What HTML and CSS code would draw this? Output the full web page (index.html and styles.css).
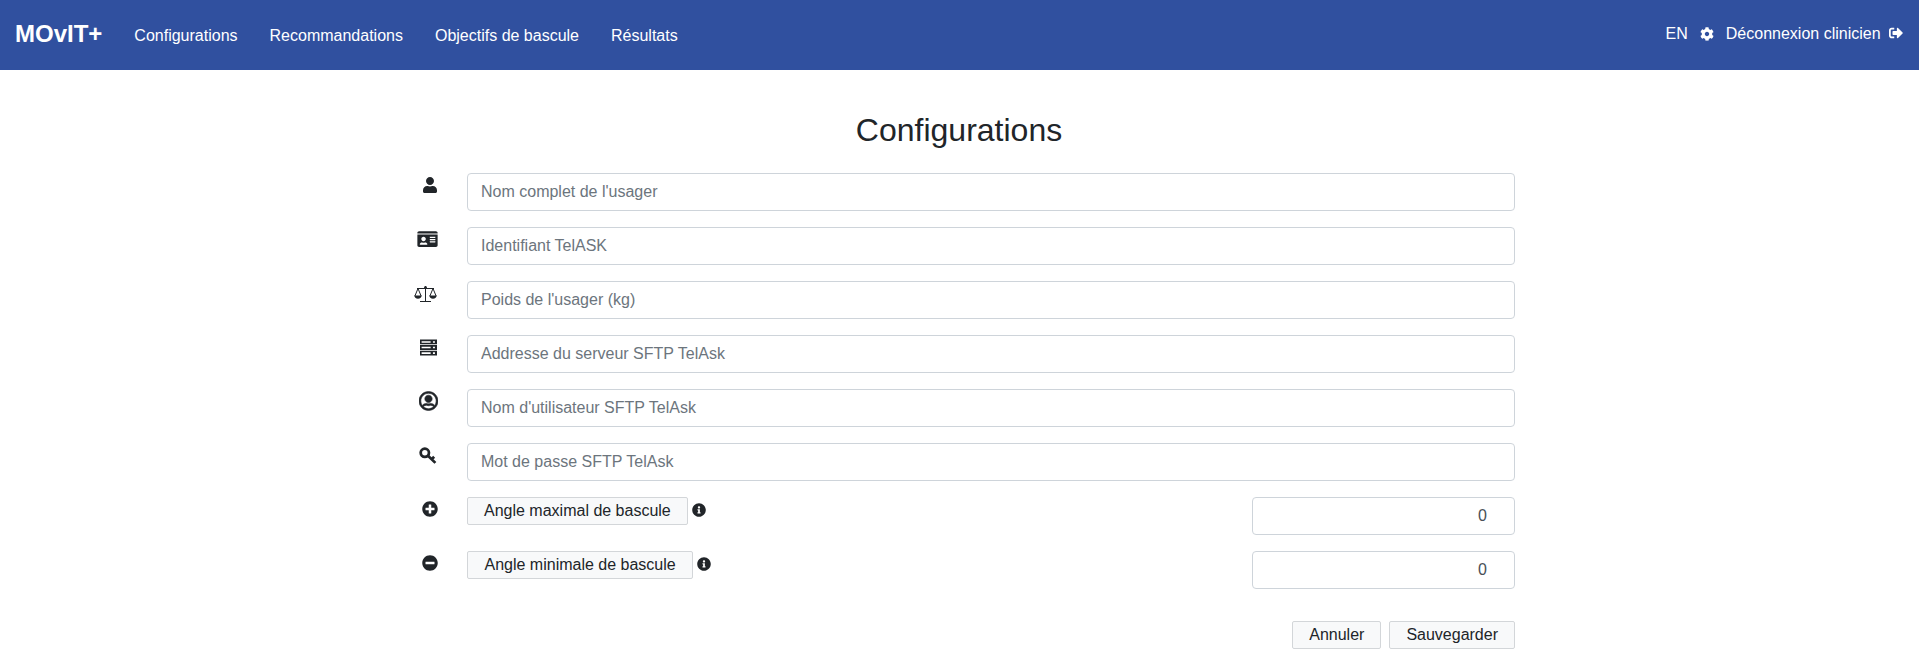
FILE: index.html
```html
<!DOCTYPE html>
<html lang="fr">

<head>
  <meta charset="UTF-8">
  <meta name="viewport" content="width=device-width, initial-scale=1.0">
  <title>MOvIT+</title>
  <link rel="stylesheet" href="styles.css">
</head>

<body>
  <nav class="navbar">
    <a class="brand" href="#">MOvIT+</a>
    <ul class="nav-links">
      <li><a href="#">Configurations</a></li>
      <li><a href="#">Recommandations</a></li>
      <li><a href="#">Objectifs de bascule</a></li>
      <li><a href="#">Résultats</a></li>
    </ul>
    <div class="nav-right">
      <a href="#">EN</a>
      <svg class="nav-icon" viewBox="0 0 512 512"><path d="M487.4 315.7l-42.6-24.6c4.3-23.2 4.3-47 0-70.2l42.6-24.6c4.9-2.8 7.1-8.6 5.5-14-11.1-35.6-30-67.8-54.7-94.6-3.8-4.1-10-5.1-14.8-2.3L380.8 110c-17.9-15.4-38.5-27.3-60.8-35.1V25.8c0-5.6-3.9-10.5-9.4-11.7-36.7-8.2-74.3-7.8-109.2 0-5.5 1.2-9.4 6.1-9.4 11.7V75c-22.2 7.9-42.8 19.8-60.8 35.1L88.7 85.5c-4.9-2.8-11-1.9-14.8 2.3-24.7 26.7-43.6 58.9-54.7 94.6-1.7 5.4.6 11.2 5.5 14L67.3 221c-4.3 23.2-4.3 47 0 70.2l-42.6 24.6c-4.9 2.8-7.1 8.6-5.5 14 11.1 35.6 30 67.8 54.7 94.6 3.8 4.1 10 5.1 14.8 2.3l42.6-24.6c17.9 15.4 38.5 27.3 60.8 35.1v49.2c0 5.6 3.9 10.5 9.4 11.7 36.7 8.2 74.3 7.8 109.2 0 5.5-1.2 9.4-6.1 9.4-11.7v-49.2c22.2-7.9 42.8-19.8 60.8-35.1l42.6 24.6c4.9 2.8 11 1.9 14.8-2.3 24.7-26.7 43.6-58.9 54.7-94.6 1.5-5.5-.7-11.3-5.6-14.1zM256 336c-44.1 0-80-35.9-80-80s35.9-80 80-80 80 35.9 80 80-35.9 80-80 80z"/></svg>
      <a href="#" class="logout">Déconnexion clinicien
        <svg class="nav-icon" viewBox="0 0 512 512"><path d="M497 273L329 441c-15 15-41 4.5-41-17v-96H152c-13.3 0-24-10.7-24-24v-96c0-13.3 10.7-24 24-24h136V88c0-21.4 25.9-32 41-17l168 168c9.3 9.4 9.3 24.6 0 34zM192 436v-40c0-6.6-5.4-12-12-12H96c-17.7 0-32-14.3-32-32V160c0-17.7 14.3-32 32-32h84c6.6 0 12-5.4 12-12V76c0-6.6-5.4-12-12-12H96c-53 0-96 43-96 96v192c0 53 43 96 96 96h84c6.6 0 12-5.4 12-12z"/></svg>
      </a>
    </div>
  </nav>

  <main class="content">
    <h2 class="title">Configurations</h2>

    <div class="row">
      <span class="row-icon">
        <svg class="icon" viewBox="0 0 448 512"><path d="M224 256c70.7 0 128-57.3 128-128S294.7 0 224 0 96 57.3 96 128s57.3 128 128 128zm89.6 32h-16.7c-22.2 10.2-46.9 16-72.9 16s-50.6-5.8-72.9-16h-16.7C60.2 288 0 348.2 0 422.4V464c0 26.5 21.5 48 48 48h352c26.5 0 48-21.5 48-48v-41.6c0-74.2-60.2-134.4-134.4-134.4z"/></svg>
      </span>
      <input class="field" type="text" placeholder="Nom complet de l'usager">
    </div>

    <div class="row">
      <span class="row-icon">
        <svg class="icon icon-card" viewBox="0 0 576 512"><path d="M528 32H48C21.5 32 0 53.5 0 80v16h576V80c0-26.5-21.500-48-48-48zM0 432c0 26.5 21.500 48 48 48h480c26.500 0 48-21.500 48-48V128H0v304zm352-232c0-4.400 3.600-8 8-8h144c4.400 0 8 3.600 8 8v16c0 4.400-3.600 8-8 8H360c-4.400 0-8-3.600-8-8v-16zm0 64c0-4.400 3.600-8 8-8h144c4.400 0 8 3.600 8 8v16c0 4.400-3.600 8-8 8H360c-4.400 0-8-3.600-8-8v-16zm0 64c0-4.400 3.600-8 8-8h144c4.400 0 8 3.600 8 8v16c0 4.400-3.600 8-8 8H360c-4.400 0-8-3.600-8-8v-16zM176 192c35.300 0 64 28.700 64 64s-28.700 64-64 64-64-28.700-64-64 28.700-64 64-64zM67.100 396.200C75.500 370.500 99.600 352 128 352h8.200c12.300 5.100 25.700 8 39.800 8s27.600-2.900 39.800-8h8.200c28.400 0 52.500 18.500 60.900 44.200 3.200 9.900-5.200 19.800-15.600 19.800H82.700c-10.400 0-18.800-10-15.600-19.800z"/></svg>
      </span>
      <input class="field" type="text" placeholder="Identifiant TelASK">
    </div>

    <div class="row">
      <span class="row-icon">
        <svg class="icon icon-scale" viewBox="0 0 23 18"><path class="scale-line" d="M11.500 1v15M6 16.500h11M3 3.500h17M4 3.500L.9 11M4 3.500L7.100 11M19 3.500L15.900 11M19 3.500L22.100 11"/><path d="M.3 10.500h7.400c0 2-1.600 3.200-3.700 3.200S.3 12.500.3 10.500zM15.300 10.500h7.400c0 2-1.600 3.200-3.700 3.200s-3.700-1.200-3.700-3.200z"/><circle cx="11.500" cy="2.500" r="1.500"/></svg>
      </span>
      <input class="field" type="text" placeholder="Poids de l'usager (kg)">
    </div>

    <div class="row">
      <span class="row-icon">
        <svg class="icon icon-server" viewBox="0 0 512 512"><path fill-rule="evenodd" d="M0 16h512v144H0zM0 184h512v144H0zM0 352h512v144H0zM48 64v48h272V64zM48 232v48h272v-48zM48 400v48h272v-48zM390 64v48h60V64zM390 232v48h60v-48zM390 400v48h60v-48z"/></svg>
      </span>
      <input class="field" type="text" placeholder="Addresse du serveur SFTP TelAsk">
    </div>

    <div class="row">
      <span class="row-icon">
        <svg class="icon icon-circle" viewBox="0 0 496 512"><path d="M248 104c-53 0-96 43-96 96s43 96 96 96 96-43 96-96-43-96-96-96zm0-96C111 8 0 119 0 256s111 248 248 248 248-111 248-248S385 8 248 8zm0 448c-49.700 0-95.100-18.300-130.100-48.400 14.900-23 40.400-38.600 69.600-39.500 20.800 6.400 40.600 9.600 60.500 9.600s39.700-3.100 60.500-9.600c29.200 1 54.700 16.500 69.600 39.500-35 30.100-80.400 48.400-130.100 48.400zm162.700-84.100c-24.400-31.400-62.100-51.900-105-51.900-10.200 0-26 9.600-57.700 9.600-31.600 0-47.500-9.600-57.700-9.600-42.800 0-80.500 20.500-105 51.900C61.900 339.200 48 299.300 48 256c0-110.300 89.700-200 200-200s200 89.700 200 200c0 43.300-13.900 83.200-37.300 115.900z"/></svg>
      </span>
      <input class="field" type="text" placeholder="Nom d'utilisateur SFTP TelAsk">
    </div>

    <div class="row">
      <span class="row-icon">
        <svg class="icon icon-key" viewBox="0 0 17 17"><circle cx="5.500" cy="5.500" r="3.900"/><path d="M8.500 8.200l7 6.800M12 11.600l2.300-2.300"/></svg>
      </span>
      <input class="field" type="password" placeholder="Mot de passe SFTP TelAsk">
    </div>

    <div class="row">
      <span class="row-icon">
        <svg class="icon" viewBox="0 0 512 512"><path d="M256 8C119 8 8 119 8 256s111 248 248 248 248-111 248-248S393 8 256 8zm144 276c0 6.600-5.400 12-12 12h-92v92c0 6.600-5.400 12-12 12h-56c-6.600 0-12-5.400-12-12v-92h-92c-6.600 0-12-5.400-12-12v-56c0-6.600 5.400-12 12-12h92v-92c0-6.600 5.400-12 12-12h56c6.600 0 12 5.400 12 12v92h92c6.600 0 12 5.400 12 12v56z"/></svg>
      </span>
      <div class="angle-label">
        <button class="btn" type="button">Angle maximal de bascule</button>
        <svg class="info" viewBox="0 0 512 512"><path d="M256 8C119.043 8 8 119.083 8 256c0 136.997 111.043 248 248 248s248-111.003 248-248C504 119.083 392.957 8 256 8zm0 110c23.196 0 42 18.804 42 42s-18.804 42-42 42-42-18.804-42-42 18.804-42 42-42zm56 254c0 6.627-5.373 12-12 12h-88c-6.627 0-12-5.373-12-12v-24c0-6.627 5.373-12 12-12h12v-64h-12c-6.627 0-12-5.373-12-12v-24c0-6.627 5.373-12 12-12h64c6.627 0 12 5.373 12 12v100h12c6.627 0 12 5.373 12 12v24z"/></svg>
      </div>
      <input class="field number" type="text" value="0">
    </div>

    <div class="row">
      <span class="row-icon">
        <svg class="icon" viewBox="0 0 512 512"><path d="M256 8C119 8 8 119 8 256s111 248 248 248 248-111 248-248S393 8 256 8zM124 296c-6.600 0-12-5.400-12-12v-56c0-6.600 5.400-12 12-12h264c6.600 0 12 5.400 12 12v56c0 6.600-5.400 12-12 12H124z"/></svg>
      </span>
      <div class="angle-label">
        <button class="btn btn-min" type="button">Angle minimale de bascule</button>
        <svg class="info" viewBox="0 0 512 512"><path d="M256 8C119.043 8 8 119.083 8 256c0 136.997 111.043 248 248 248s248-111.003 248-248C504 119.083 392.957 8 256 8zm0 110c23.196 0 42 18.804 42 42s-18.804 42-42 42-42-18.804-42-42 18.804-42 42-42zm56 254c0 6.627-5.373 12-12 12h-88c-6.627 0-12-5.373-12-12v-24c0-6.627 5.373-12 12-12h12v-64h-12c-6.627 0-12-5.373-12-12v-24c0-6.627 5.373-12 12-12h64c6.627 0 12 5.373 12 12v100h12c6.627 0 12 5.373 12 12v24z"/></svg>
      </div>
      <input class="field number" type="text" value="0">
    </div>

    <div class="actions">
      <button class="btn" type="button">Annuler</button>
      <button class="btn" type="button">Sauvegarder</button>
    </div>
  </main>
</body>

</html>
```

FILE: styles.css
```css
* {
  box-sizing: border-box;
}

body {
  margin: 0;
  font-family: "Liberation Sans", Arial, sans-serif;
  font-size: 16px;
  color: #212529;
  background: #fff;
}

a {
  color: #fff;
  text-decoration: none;
}

.navbar {
  height: 70px;
  padding: 0 16px 2px 15px;
  background: #30509f;
  display: flex;
  align-items: center;
}

.brand {
  font-size: 24px;
  font-weight: bold;
  margin-right: 32px;
}

.nav-links {
  display: flex;
  gap: 32px;
  margin: 0;
  padding: 4px 0 0;
  list-style: none;
}

.nav-right {
  margin-left: auto;
  display: flex;
  align-items: center;
  gap: 12px;
}

.nav-icon {
  width: 14px;
  height: 14px;
  fill: #fff;
  vertical-align: -1px;
}

.logout .nav-icon {
  margin-left: 4px;
}

.content {
  width: 1048px;
  margin-left: 467px;
}

.title {
  font-size: 32px;
  font-weight: 500;
  line-height: 38px;
  margin: 0;
  padding: 41px 0 0;
  height: 103px;
  text-align: center;
  width: 984px;
}

.row {
  display: flex;
  justify-content: space-between;
  height: 38px;
  margin-bottom: 16px;
}

.row-icon {
  width: 50px;
  height: 24px;
  margin-left: -79.5px;
  margin-right: 29.5px;
  flex-shrink: 0;
  display: flex;
  justify-content: flex-end;
  align-items: center;
}

.icon {
  width: 16px;
  height: 16px;
  fill: #212529;
}

.icon-card {
  width: 21px;
  height: 18px;
}

.icon-scale {
  width: 23px;
  height: 18px;
  margin: 1px 1px 0 0;
}

.scale-line {
  fill: none;
  stroke: #212529;
  stroke-width: 1;
}

.icon-server {
  width: 19px;
  height: 17px;
}

.icon-circle {
  width: 19px;
  height: 20px;
  stroke: #212529;
  stroke-width: 16;
}

.icon-key {
  width: 18px;
  height: 18px;
  margin: 2px 1px 0 0;
  fill: none;
  stroke: #212529;
  stroke-width: 2.6;
}

.field {
  flex: 1;
  height: 38px;
  padding: 6px 12px 6px 13px;
  font: inherit;
  color: #495057;
  background: #fff;
  border: 1px solid #ced4da;
  border-radius: 4px;
  outline: none;
}

.field::placeholder {
  color: #6c757d;
}

.field.number {
  flex: none;
  width: 263px;
  text-align: right;
  padding-right: 27px;
}

.angle-label {
  flex: 1;
  display: flex;
  align-items: flex-start;
}

.info {
  width: 14px;
  height: 14px;
  fill: #212529;
  margin: 6px 0 0 4px;
}

.btn {
  height: 28px;
  padding: 0 16px;
  font: inherit;
  color: #212529;
  background: #f8f9fa;
  border: 1px solid #d3d6d9;
  border-radius: 2px;
}

.btn-min {
  padding: 0 16.5px;
}

.actions {
  display: flex;
  justify-content: flex-end;
  gap: 8px;
  margin-top: 32px;
}
```
